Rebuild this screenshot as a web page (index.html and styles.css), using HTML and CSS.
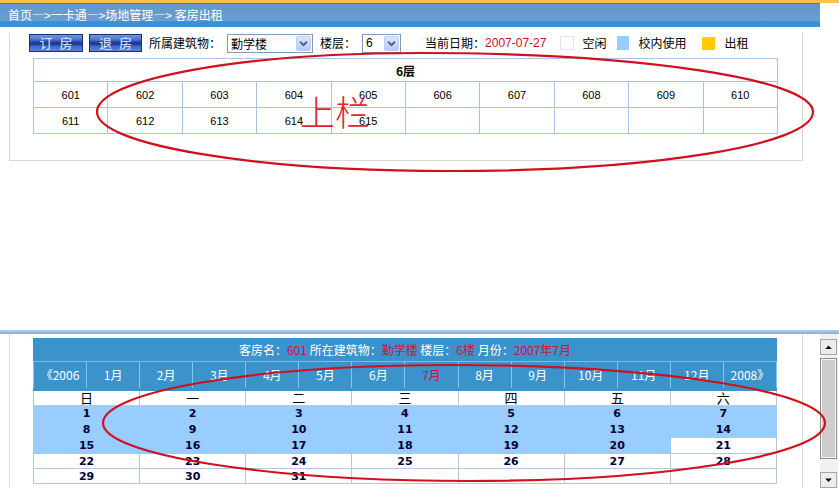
FILE: index.html
```html
<!DOCTYPE html>
<html lang="zh-CN">
<head>
<meta charset="utf-8">
<title>客房出租</title>
<link rel="stylesheet" href="styles.css">
</head>
<body>
<div class="page">
  <div class="top-frame">
    <div class="crumb-bar">首页—&gt;一卡通—&gt;场地管理—&gt; 客房出租</div>
    <div class="panel">
      <div class="toolbar">
        <button class="btn btn-book">订 房</button>
        <button class="btn btn-return">退 房</button>
        <span class="label lbl-building">所属建筑物：</span>
        <span class="select sel-building"><span class="sel-text">勤学楼</span><span class="sel-arrow"><svg width="15" height="15" viewBox="0 0 15 15"><polyline points="3.5,5.5 7.5,9.5 11.5,5.5" fill="none" stroke="#4a5f8c" stroke-width="2.2"/></svg></span></span>
        <span class="label lbl-floor">楼层：</span>
        <span class="select sel-floor"><span class="sel-text num">6</span><span class="sel-arrow"><svg width="15" height="15" viewBox="0 0 15 15"><polyline points="3.5,5.5 7.5,9.5 11.5,5.5" fill="none" stroke="#4a5f8c" stroke-width="2.2"/></svg></span></span>
        <span class="label lbl-date">当前日期：</span><span class="date-val">2007-07-27</span>
        <span class="swatch sw-free"></span><span class="legend-text lt-free">空闲</span>
        <span class="swatch sw-school"></span><span class="legend-text lt-school">校内使用</span>
        <span class="swatch sw-rent"></span><span class="legend-text lt-rent">出租</span>
      </div>
      <table class="rooms">
        <tr class="rooms-head"><th colspan="10">6层</th></tr>
        <tr><td>601</td><td>602</td><td>603</td><td>604</td><td>605</td><td>606</td><td>607</td><td>608</td><td>609</td><td>610</td></tr>
        <tr><td>611</td><td>612</td><td>613</td><td>614</td><td>615</td><td></td><td></td><td></td><td></td><td></td></tr>
      </table>
    </div>
  </div>
  <div class="frame-split"></div>
  <div class="bottom-frame">
    <div class="cal-panel">
      <table class="cal">
        <colgroup><col><col><col><col><col><col><col><col><col><col><col><col><col><col></colgroup>
        <tr class="cal-title"><td colspan="14">客房名：<span class="hl">601</span> 所在建筑物：<span class="hl">勤学楼</span> 楼层：<span class="hl">6楼</span> 月份：<span class="hl">2007年7月</span></td></tr>
        <tr class="cal-months"><td>《2006</td><td>1月</td><td>2月</td><td>3月</td><td>4月</td><td>5月</td><td>6月</td><td class="cur">7月</td><td>8月</td><td>9月</td><td>10月</td><td>11月</td><td>12月</td><td>2008》</td></tr>
        <tr class="cal-week"><td colspan="2">日</td><td colspan="2">一</td><td colspan="2">二</td><td colspan="2">三</td><td colspan="2">四</td><td colspan="2">五</td><td colspan="2">六</td></tr>
        <tr class="cal-day r1"><td colspan="2" class="used">1</td><td colspan="2" class="used">2</td><td colspan="2" class="used">3</td><td colspan="2" class="used">4</td><td colspan="2" class="used">5</td><td colspan="2" class="used">6</td><td colspan="2" class="used">7</td></tr>
        <tr class="cal-day r2"><td colspan="2" class="used">8</td><td colspan="2" class="used">9</td><td colspan="2" class="used">10</td><td colspan="2" class="used">11</td><td colspan="2" class="used">12</td><td colspan="2" class="used">13</td><td colspan="2" class="used">14</td></tr>
        <tr class="cal-day r3"><td colspan="2" class="used">15</td><td colspan="2" class="used">16</td><td colspan="2" class="used">17</td><td colspan="2" class="used">18</td><td colspan="2" class="used">19</td><td colspan="2" class="used">20</td><td colspan="2">21</td></tr>
        <tr class="cal-day r4"><td colspan="2">22</td><td colspan="2">23</td><td colspan="2">24</td><td colspan="2">25</td><td colspan="2">26</td><td colspan="2">27</td><td colspan="2">28</td></tr>
        <tr class="cal-day r5"><td colspan="2">29</td><td colspan="2">30</td><td colspan="2">31</td><td colspan="2"></td><td colspan="2"></td><td colspan="2"></td><td colspan="2"></td></tr>
      </table>
    </div>
    <div class="scrollbar">
      <div class="sb-btn"><svg width="16" height="14" viewBox="0 0 16 14"><polygon points="4.5,9 11.5,9 8,5.5" fill="#000"/></svg></div>
      <div class="sb-thumb"></div>
      <div class="sb-track"></div>
      <div class="sb-btn"><svg width="16" height="14" viewBox="0 0 16 14"><polygon points="4.5,5.5 11.5,5.5 8,9" fill="#000"/></svg></div>
    </div>
  </div>
  <svg class="annot" width="839" height="488" viewBox="0 0 839 488">
    <path d="M97,112 C97,79 242,53 420,53 C637,53 813,79 813,112 C813,145 650,171 450,171 C255,171 97,145 97,112 Z" fill="none" stroke="#d0101e" stroke-width="2.2"/>
    <path d="M103,423 C103,391 258,365 450,365 C657,365 825,391 825,423 C825,455 666,481 470,481 C267,481 103,455 103,423 Z" fill="none" stroke="#d0101e" stroke-width="2.2"/>
    <text class="annot-text" x="300" y="126">上栏</text>
  </svg>
</div>
</body>
</html>
```
FILE: styles.css
```css
* { box-sizing: border-box; }
html, body { margin: 0; padding: 0; background: #fff; }
body {
  font-family: "Noto Sans CJK SC", "Liberation Sans", sans-serif;
  font-size: 12px;
  color: #000;
}
.page { position: relative; width: 839px; height: 488px; overflow: hidden; }

/* ---------- top frame ---------- */
.top-frame { height: 330px; border-top: 3px solid #f6c444; }
.crumb-bar {
  width: 820px; height: 24px;
  padding-left: 8px;
  line-height: 22px;
  color: #fff;
  border-top: 1px solid #56769e;
  background: linear-gradient(to bottom, #6396c9 0, #6b9ed1 72%, #3f91d6 76%, #3a8dd4 100%);
  white-space: nowrap;
}
.panel {
  margin-left: 9px; width: 794px; height: 128px;
  border: 1px solid #d8d8d8; border-top: 0;
}
.toolbar {
  display: flex; align-items: center;
  height: 20px; margin-top: 6px; padding-left: 19px;
  line-height: 16px; white-space: nowrap;
}
.btn {
  height: 18px; padding: 0; margin: 0;
  font-family: "Noto Sans CJK SC", sans-serif; font-size: 13px; line-height: 14px;
  word-spacing: 4px;
  color: #e4ecff;
  border: 1px solid #16307a;
  background: linear-gradient(to bottom, #6d93e0 0, #4a74d2 30%, #1e3f9c 45%, #1c3a94 58%, #3f69c8 70%, #5b84da 100%);
}
.btn-book { width: 54px; }
.btn-return { width: 53px; margin-left: 6px; }
.lbl-building { margin-left: 7px; }
.select {
  display: flex; align-items: center; justify-content: space-between;
  height: 19px; border: 1px solid #7f9db9; background: #fff;
  padding: 0 1px 0 3px;
}
.sel-building { width: 86px; margin-left: 6px; }
.sel-floor { width: 39px; margin-left: 6px; }
.sel-text { font-size: 12px; line-height: 15px; }
.num { font-family: "Liberation Sans", sans-serif; }
.sel-arrow {
  display: flex; align-items: center; justify-content: center;
  width: 15px; height: 15px;
  border: 1px solid #b9cdf5; border-radius: 2px;
  background: linear-gradient(to bottom, #dbe6fd, #b7cbf7);
}
.lbl-floor { margin-left: 7px; }
.lbl-date { margin-left: 24px; }
.date-val { font-family: "Liberation Sans", sans-serif; font-size: 12px; color: #c8102e; }
.swatch { display: inline-block; width: 14px; height: 14px; }
.sw-free { margin-left: 14px; border: 1px solid #e4e4e4; background: #fff; }
.sw-school { margin-left: 11px; width: 12px; background: #99ccff; }
.sw-rent { margin-left: 16px; width: 13px; height: 13px; background: #ffcc00; }
.lt-free { margin-left: 8px; }
.lt-school { margin-left: 9px; }
.lt-rent { margin-left: 9px; }

.rooms {
  margin: 5px 0 0 23px; width: 745px;
  border-collapse: collapse; table-layout: fixed;
  font-family: "Liberation Sans", sans-serif; font-size: 11px;
}
.rooms th, .rooms td {
  border: 1px solid #a9c5e2; text-align: center; padding: 0;
}
.rooms th {
  height: 23px;
  font-family: "Noto Sans CJK SC", sans-serif; font-size: 12px; font-weight: bold;
}
.rooms td { height: 26px; }

/* ---------- frame split ---------- */
.frame-split {
  height: 4px;
  background: linear-gradient(to bottom, #b3d0ec, #7fb0dc);
}

/* ---------- bottom frame ---------- */
.bottom-frame { display: flex; height: 154px; }
.cal-panel {
  margin-left: 9px; width: 794px; height: 154px;
  border-left: 1px solid #dcdcdc; border-right: 1px solid #dcdcdc;
  padding-top: 4px; padding-left: 23px;
}
.cal {
  width: 744px; border-collapse: collapse; table-layout: fixed;
}
.cal td { padding: 0; text-align: center; }
.cal-title td {
  height: 23px; background: #3a93ca; color: #fff;
  font-size: 12px; line-height: 16px;
  border: 1px solid #3a93ca; border-bottom: 1px solid #7cbde6;
}
.hl { color: #d0143a; }
.cal-months td {
  height: 28px; background: #3a93ca; color: #fff;
  font-size: 12px; line-height: 16px;
  border: 1px solid #86c4ea; border-top-color: #7cbde6;
  border-bottom: 3px solid #3a93ca;
}
.cal-months td.cur { color: #d0143a; }
.cal-week td {
  height: 15px; font-size: 13px; line-height: 14px;
  border: 1px solid #b2c9de;
}
.cal-day td {
  font-family: "DejaVu Sans", sans-serif; font-weight: bold; font-size: 11px; line-height: 13px;
  color: #000033;
  border: 1px solid #b2c9de;
}
.cal-day.r1 td, .cal-day.r2 td, .cal-day.r3 td { height: 16px; }
.cal-day.r4 td, .cal-day.r5 td { height: 15px; }
.cal-day td.used { background: #99ccff; border-color: #99ccff; }

.scrollbar {
  display: flex; flex-direction: column;
  width: 18px; margin-left: 17px; padding-top: 5px;
  background: #f1f1f1;
}
.sb-btn {
  display: flex; align-items: center; justify-content: center;
  width: 17px; height: 16px;
  border: 1px solid #a7a7a7; background: #ececec;
}
.sb-thumb {
  width: 17px; height: 101px; margin-top: 3px;
  border: 1px solid #8e8e8e; box-shadow: inset 0 0 0 1px #f4f4f4;
  background: #cdcdcd;
}
.sb-track { flex: 1; }

/* ---------- annotations overlay ---------- */
.annot { position: absolute; left: 0; top: 0; pointer-events: none; }
.annot-text {
  font-family: "Noto Sans CJK SC", sans-serif; font-size: 35px; font-weight: 300;
  fill: #e0242e;
}
```
